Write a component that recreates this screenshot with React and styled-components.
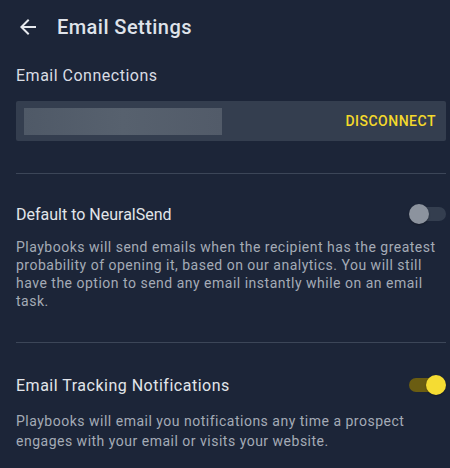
import React from "react";
import styled, { createGlobalStyle } from "styled-components";

const Global = createGlobalStyle`
  html, body { margin: 0; padding: 0; background: #1c2538; }
  body { font-family: Roboto, "Liberation Sans", sans-serif; -webkit-font-smoothing: antialiased; }
`;

const Page = styled.div`
  width: 450px;
  min-height: 468px;
  box-sizing: border-box;
  padding: 0 4px 0 16px;
  background: #1c2538;
  overflow: hidden;
`;

const Header = styled.header`
  display: flex;
  align-items: center;
  height: 54px;
  gap: 17px;
`;

const BackButton = styled.button`
  display: flex;
  align-items: center;
  justify-content: center;
  width: 24px;
  height: 24px;
  padding: 0;
  border: 0;
  background: none;
  color: #e6e9ee;
  cursor: pointer;
`;

const Title = styled.h1`
  margin: 0;
  font-size: 20px;
  font-weight: 500;
  letter-spacing: 0.45px;
  color: #dfe3ea;
`;

const SectionLabel = styled.div`
  font-size: 16px;
  font-weight: 400;
  letter-spacing: 0.5px;
  color: #d9dde4;
  line-height: 20px;
  margin-top: 12px;
`;

const ConnectionBox = styled.div`
  display: flex;
  align-items: center;
  justify-content: space-between;
  height: 40px;
  margin-top: 15px;
  padding: 0 10px 0 8px;
  background: #343e4f;
  border-radius: 2px;
`;

const Redacted = styled.div`
  width: 198px;
  height: 27px;
  background: linear-gradient(90deg, #4f5967 0%, #57616e 50%, #525b69 100%);
`;

const Disconnect = styled.button`
  border: 0;
  background: none;
  padding: 0;
  font-family: inherit;
  font-size: 14px;
  font-weight: 500;
  letter-spacing: 0.5px;
  color: #f4d92b;
  cursor: pointer;
`;

const Divider = styled.hr`
  border: 0;
  height: 1px;
  background: #3c4658;
  margin: ${(p) => p.$top}px 0 0 0;
`;

const SettingRow = styled.div`
  display: flex;
  align-items: center;
  justify-content: space-between;
  margin-top: ${(p) => p.$top}px;
  height: 24px;
`;

const SettingTitle = styled.div`
  font-size: 16px;
  letter-spacing: ${(p) => p.$ls || 0}px;
  color: #e2e5ea;
`;

const Description = styled.p`
  margin: ${(p) => p.$top}px 0 0 0;
  font-size: 14px;
  line-height: ${(p) => p.$lh}px;
  color: #a4abb6;
  padding-right: 6px;
  letter-spacing: 0.5px;
`;

const Track = styled.div`
  position: relative;
  width: 34px;
  height: 14px;
  border-radius: 7px;
  background: ${(p) => (p.$on ? "#6b5d12" : "#343e4f")};
  margin-right: ${(p) => (p.$on ? "3px" : "0")};
`;

const Thumb = styled.div`
  position: absolute;
  top: -3px;
  left: ${(p) => (p.$on ? "17px" : "-3px")};
  width: 20px;
  height: 20px;
  border-radius: 50%;
  background: ${(p) => (p.$on ? "#f5dc33" : "#8c939e")};
  box-shadow: 0 1px 2px rgba(0,0,0,0.3);
`;

const Toggle = ({ on }) => (
  <Track $on={on}>
    <Thumb $on={on} />
  </Track>
);

export default function App() {
  return (
    <>
      <Global />
      <Page>
        <Header>
          <BackButton aria-label="Back">
            <svg width="24" height="24" viewBox="0 0 24 24" fill="currentColor">
              <path d="M20 11H7.83l5.59-5.59L12 4l-8 8 8 8 1.41-1.41L7.83 13H20v-2z" />
            </svg>
          </BackButton>
          <Title>Email Settings</Title>
        </Header>
        <SectionLabel>Email Connections</SectionLabel>
        <ConnectionBox>
          <Redacted />
          <Disconnect>DISCONNECT</Disconnect>
        </ConnectionBox>
        <Divider $top={32} />
        <SettingRow $top={28}>
          <SettingTitle>Default to NeuralSend</SettingTitle>
          <Toggle on={false} />
        </SettingRow>
        <Description $top={12} $lh={18}>
          Playbooks will send emails when the recipient has the greatest
          probability of opening it, based on our analytics. You will still
          have the option to send any email instantly while on an email task.
        </Description>
        <Divider $top={32} />
        <SettingRow $top={30}>
          <SettingTitle $ls={0.5}>Email Tracking Notifications</SettingTitle>
          <Toggle on={true} />
        </SettingRow>
        <Description $top={14} $lh={20}>
          Playbooks will email you notifications any time a prospect engages
          with your email or visits your website.
        </Description>
      </Page>
    </>
  );
}
